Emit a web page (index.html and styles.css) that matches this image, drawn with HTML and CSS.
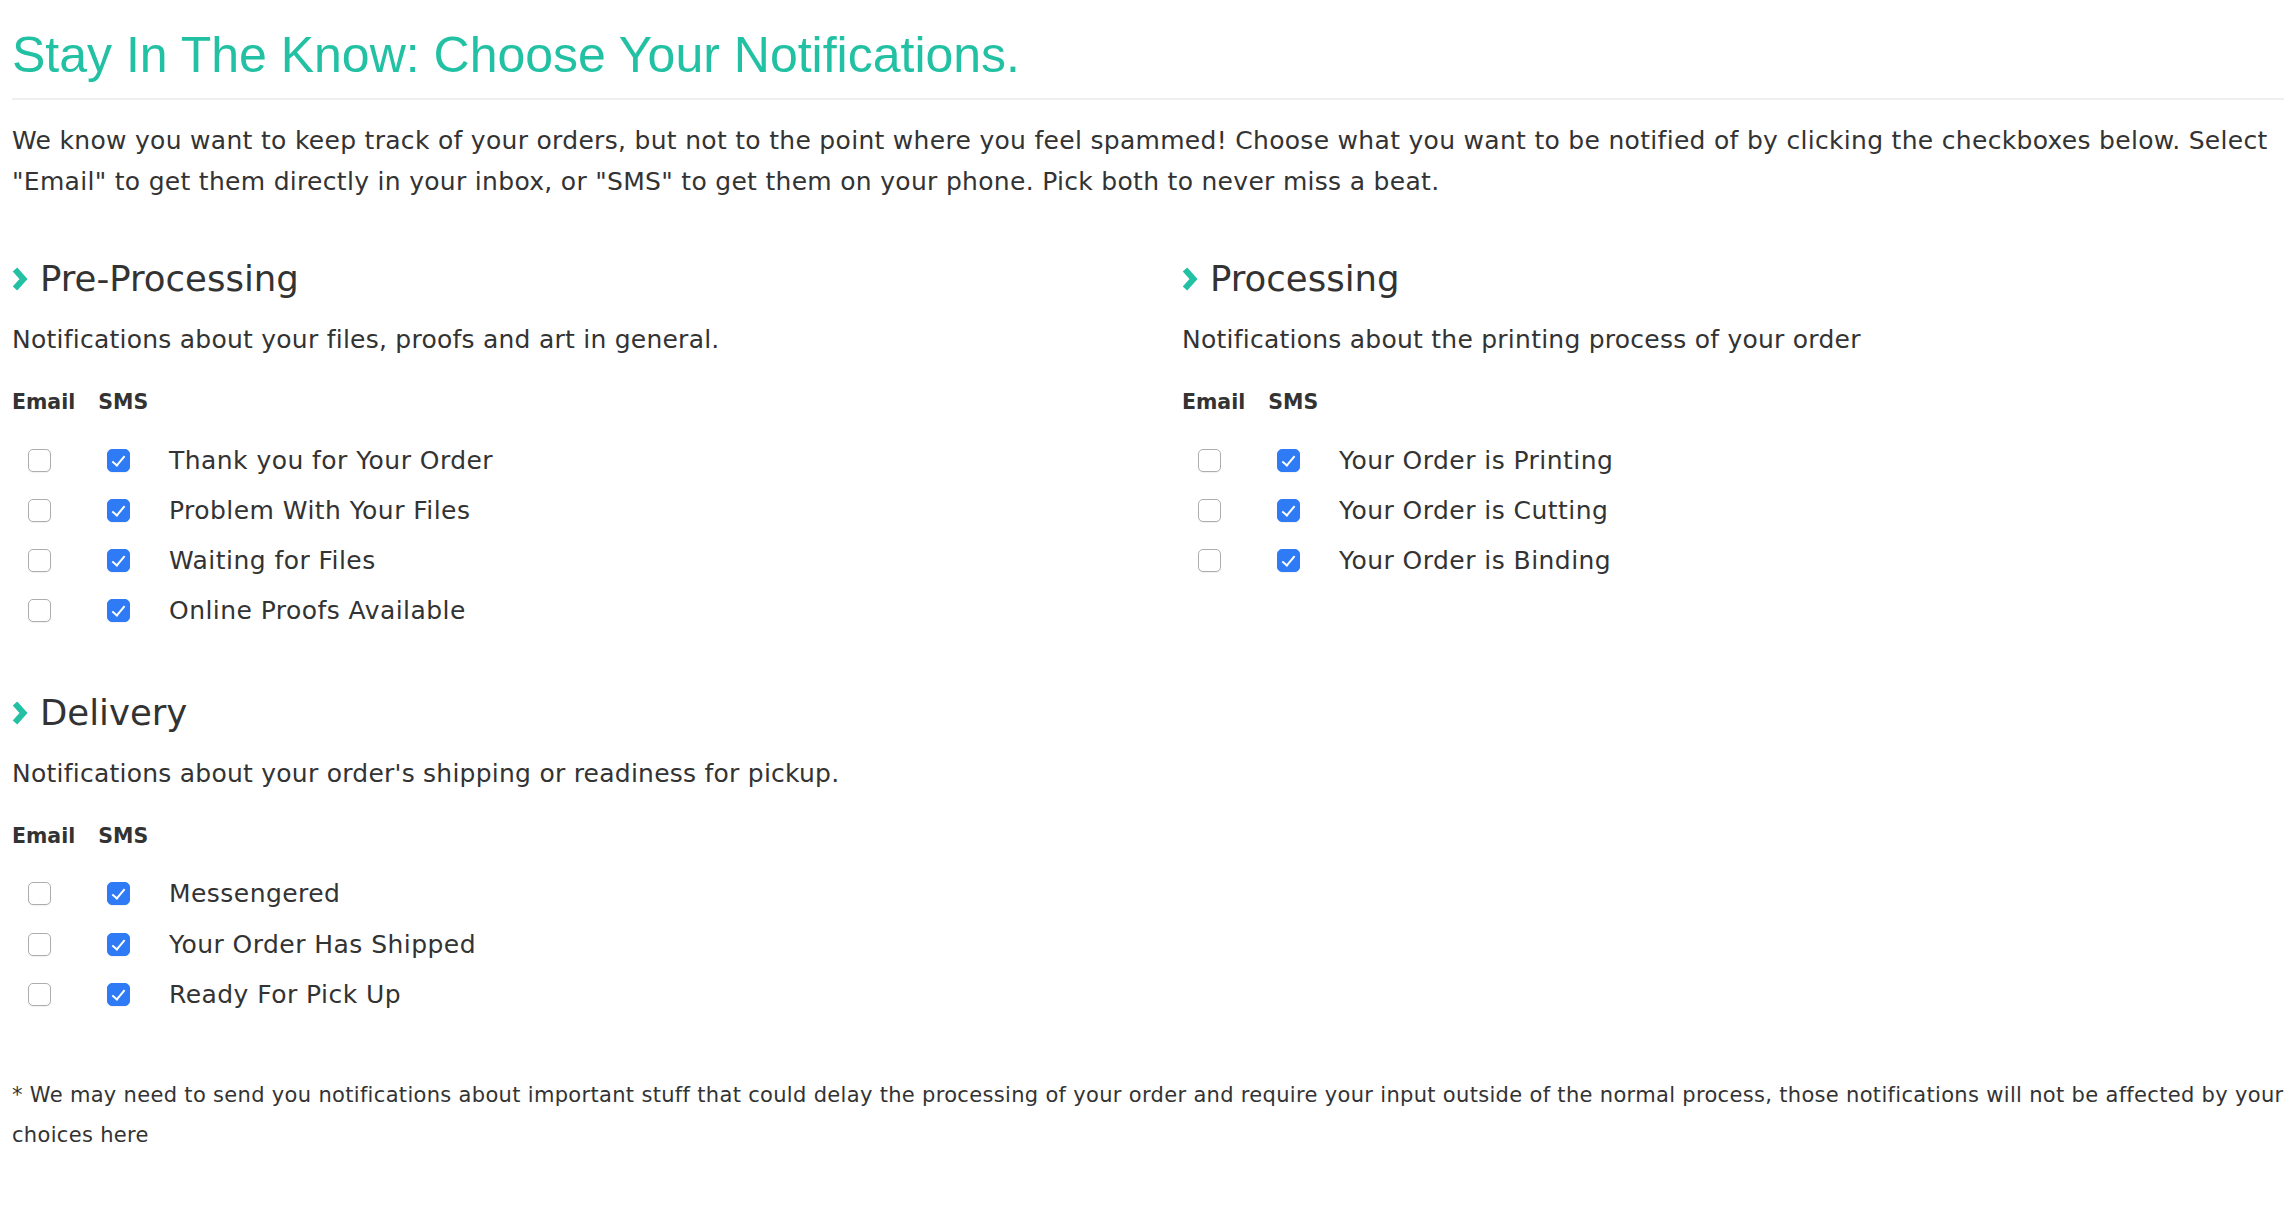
FILE: index.html
```html
<!DOCTYPE html>
<html lang="en">
<head>
  <meta charset="UTF-8" />
  <title>Notification Preferences</title>
  <link rel="stylesheet" href="styles.css">
</head>
<body>

<header class="page-head">
  <h1>Stay In The Know: Choose Your Notifications.</h1>
</header>

<p class="intro">We know you want to keep track of your orders, but not to the point where you feel spammed! Choose what you want to be notified of by clicking the checkboxes below. Select "Email" to get them directly in your inbox, or "SMS" to get them on your phone. Pick both to never miss a beat.</p>

<div class="groups">

  <section class="group">
    <h2><svg class="chevron" viewBox="0 0 16 24" width="16" height="24"><polyline points="3,2.5 11.5,12 3,21.5" /></svg>Pre-Processing</h2>
    <p class="group-desc">Notifications about your files, proofs and art in general.</p>
    <div class="prefs">
      <div class="prefs-head"><span>Email</span><span>SMS</span></div>
      <label class="pref"><input type="checkbox" class="cb-email"><input type="checkbox" class="cb-sms" checked><span>Thank you for Your Order</span></label>
      <label class="pref"><input type="checkbox" class="cb-email"><input type="checkbox" class="cb-sms" checked><span>Problem With Your Files</span></label>
      <label class="pref"><input type="checkbox" class="cb-email"><input type="checkbox" class="cb-sms" checked><span>Waiting for Files</span></label>
      <label class="pref"><input type="checkbox" class="cb-email"><input type="checkbox" class="cb-sms" checked><span>Online Proofs Available</span></label>
    </div>
  </section>

  <section class="group">
    <h2><svg class="chevron" viewBox="0 0 16 24" width="16" height="24"><polyline points="3,2.5 11.5,12 3,21.5" /></svg>Processing</h2>
    <p class="group-desc">Notifications about the printing process of your order</p>
    <div class="prefs">
      <div class="prefs-head"><span>Email</span><span>SMS</span></div>
      <label class="pref"><input type="checkbox" class="cb-email"><input type="checkbox" class="cb-sms" checked><span>Your Order is Printing</span></label>
      <label class="pref"><input type="checkbox" class="cb-email"><input type="checkbox" class="cb-sms" checked><span>Your Order is Cutting</span></label>
      <label class="pref"><input type="checkbox" class="cb-email"><input type="checkbox" class="cb-sms" checked><span>Your Order is Binding</span></label>
    </div>
  </section>

  <section class="group">
    <h2><svg class="chevron" viewBox="0 0 16 24" width="16" height="24"><polyline points="3,2.5 11.5,12 3,21.5" /></svg>Delivery</h2>
    <p class="group-desc">Notifications about your order's shipping or readiness for pickup.</p>
    <div class="prefs">
      <div class="prefs-head"><span>Email</span><span>SMS</span></div>
      <label class="pref"><input type="checkbox" class="cb-email"><input type="checkbox" class="cb-sms" checked><span>Messengered</span></label>
      <label class="pref"><input type="checkbox" class="cb-email"><input type="checkbox" class="cb-sms" checked><span>Your Order Has Shipped</span></label>
      <label class="pref"><input type="checkbox" class="cb-email"><input type="checkbox" class="cb-sms" checked><span>Ready For Pick Up</span></label>
    </div>
  </section>

</div>

<p class="footnote">* We may need to send you notifications about important stuff that could delay the processing of your order and require your input outside of the normal process, those notifications will not be affected by your choices here</p>

</body>
</html>
```

FILE: styles.css
```css
* {
  box-sizing: border-box;
}

body {
  margin: 0;
  padding: 0 12px;
  background: #ffffff;
  color: #333333;
  font-family: "DejaVu Sans", sans-serif;
}

.page-head {
  margin-top: 27px;
  padding-bottom: 15px;
  border-bottom: 2px solid #efefef;
}

.page-head h1 {
  margin: 0;
  font-family: "Liberation Sans", Arial, sans-serif;
  font-weight: normal;
  font-size: 50px;
  line-height: 56px;
  color: #22c1a3;
}

.intro {
  margin: 20px 0 0;
  font-size: 25px;
  letter-spacing: 0.3px;
  line-height: 41px;
}

.groups {
  display: grid;
  grid-template-columns: 1fr 1fr;
  column-gap: 68px;
}

.group {
  padding-top: 57px;
}

.group h2 {
  display: flex;
  align-items: center;
  margin: 0;
  font-size: 35.5px;
  font-weight: normal;
  line-height: 40px;
  color: #333333;
}

.chevron {
  margin-right: 12px;
  fill: none;
  stroke: #22c1a3;
  stroke-width: 6;
}

.group-desc {
  margin: 20px 0 0;
  font-size: 25px;
  letter-spacing: 0.24px;
  line-height: 41px;
}

.prefs {
  margin-top: 27px;
}

.prefs-head {
  display: flex;
  gap: 23px;
  font-weight: bold;
  font-size: 20.5px;
  line-height: 30px;
  margin-bottom: 18px;
}

.pref {
  display: flex;
  align-items: center;
  height: 50.2px;
  font-size: 25px;
  letter-spacing: 0.45px;
}

.pref input {
  appearance: none;
  -webkit-appearance: none;
  position: relative;
  width: 23px;
  height: 23px;
  margin: 0;
  border: 1.5px solid #adadad;
  border-radius: 5px;
  background: #ffffff;
  box-shadow: 0 1px 1px rgba(0, 0, 0, 0.06);
}

.pref .cb-email {
  margin-left: 16px;
}

.pref .cb-sms {
  margin-left: 56px;
  margin-right: 39px;
}

.pref input:checked {
  border-color: #2f7bf5;
  background: #2f7bf5;
}

.pref input:checked::after {
  content: "";
  position: absolute;
  left: 7px;
  top: 3px;
  width: 5px;
  height: 11px;
  border: solid #ffffff;
  border-width: 0 2px 2px 0;
  transform: rotate(40deg);
}

.footnote {
  margin: 56px 0 0;
  font-size: 21px;
  letter-spacing: 0.32px;
  line-height: 40px;
}
```
